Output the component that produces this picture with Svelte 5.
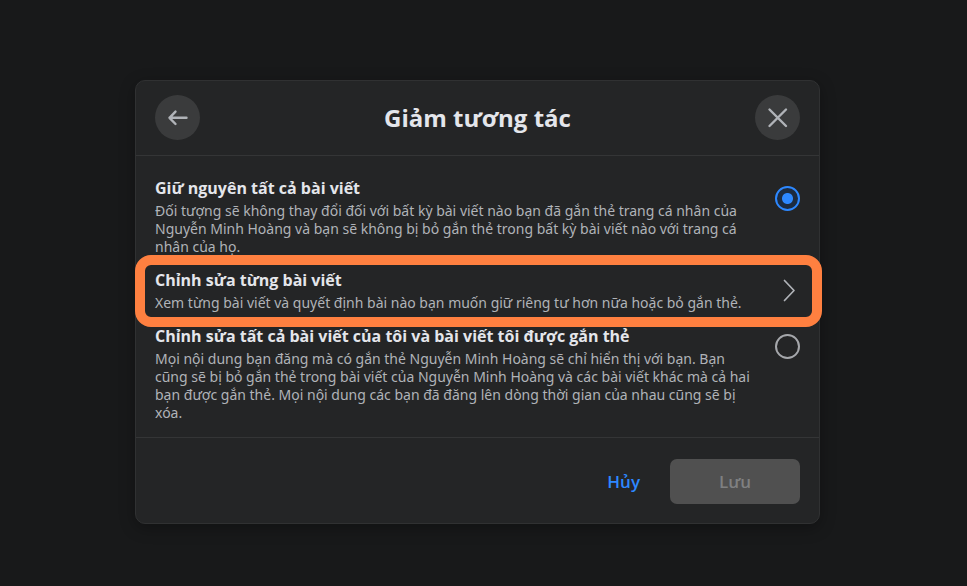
<script>
  let choice = $state('keep');
</script>

<main>
  <form class="dialog" aria-labelledby="dialog-title" onsubmit={(e) => e.preventDefault()}>
    <header>
      <button type="button" class="round" aria-label="Quay lại">
        <svg width="24" height="24" viewBox="0 0 24 24" fill="none" stroke="#b0b3b8" stroke-width="2.4" stroke-linecap="round" stroke-linejoin="round">
          <path d="M20.500 11.800H3.500M9.500 5.600L3.500 11.800L9.500 18" />
        </svg>
      </button>
      <h1 id="dialog-title">Giảm tương tác</h1>
      <button type="button" class="round" aria-label="Đóng">
        <svg width="24" height="24" viewBox="0 0 24 24" fill="none" stroke="#b0b3b8" stroke-width="2.4" stroke-linecap="round">
          <path d="M3.500 3.500L20 20M20 3.500L3.500 20" />
        </svg>
      </button>
    </header>

    <div class="options">
      <label class="option">
        <span class="text">
          <span class="name">Giữ nguyên tất cả bài viết</span>
          <span class="note">Đối tượng sẽ không thay đổi đối với bất kỳ bài viết nào bạn đã gắn thẻ trang cá nhân của Nguyễn Minh Hoàng và bạn sẽ không bị bỏ gắn thẻ trong bất kỳ bài viết nào với trang cá nhân của họ.</span>
        </span>
        <input type="radio" name="choice" value="keep" bind:group={choice} />
      </label>

      <button type="button" class="option highlighted">
        <span class="text">
          <span class="name">Chỉnh sửa từng bài viết</span>
          <span class="note">Xem từng bài viết và quyết định bài nào bạn muốn giữ riêng tư hơn nữa hoặc bỏ gắn thẻ.</span>
        </span>
        <svg class="chevron" width="20" height="24" viewBox="0 0 20 24" fill="none" stroke="#b0b3b8" stroke-width="1.700" stroke-linecap="round" stroke-linejoin="round">
          <path d="M4.500 2.500L14 12.500L4.500 22.500" />
        </svg>
      </button>

      <label class="option">
        <span class="text">
          <span class="name">Chỉnh sửa tất cả bài viết của tôi và bài viết tôi được gắn thẻ</span>
          <span class="note">Mọi nội dung bạn đăng mà có gắn thẻ Nguyễn Minh Hoàng sẽ chỉ hiển thị với bạn. Bạn cũng sẽ bị bỏ gắn thẻ trong bài viết của Nguyễn Minh Hoàng và các bài viết khác mà cả hai bạn được gắn thẻ. Mọi nội dung các bạn đã đăng lên dòng thời gian của nhau cũng sẽ bị xóa.</span>
        </span>
        <input type="radio" name="choice" value="all" bind:group={choice} />
      </label>
    </div>

    <footer>
      <button type="button" class="cancel">Hủy</button>
      <button type="submit" class="save" disabled>Lưu</button>
    </footer>
  </form>
</main>

<style>
  :global(body) {
    margin: 0;
    background: #18191a;
  }
  main {
    display: flex;
    justify-content: center;
    padding: 80px 12px 40px 0;
    font-family: 'Open Sans', 'Noto Sans', sans-serif;
    color: #e4e6eb;
  }
  .dialog {
    box-sizing: border-box;
    width: 100%;
    max-width: 685px;
    background: #242526;
    border: 1px solid #303132;
    border-radius: 10px;
    box-shadow: 0 4px 16px rgba(0, 0, 0, 0.3);
  }
  button {
    font: inherit;
    color: inherit;
    border: 0;
    padding: 0;
    background: none;
    cursor: pointer;
  }
  header {
    display: flex;
    align-items: center;
    justify-content: space-between;
    padding: 14px 19px 15px;
    border-bottom: 1px solid #343536;
  }
  .round {
    display: flex;
    align-items: center;
    justify-content: center;
    width: 45px;
    height: 45px;
    border-radius: 50%;
    background: #3a3b3c;
  }
  h1 {
    margin: 0;
    font-size: 24px;
    line-height: 32px;
    font-weight: 700;
  }
  .options {
    display: flex;
    flex-direction: column;
    gap: 12px;
    padding: 20px 19px 15px;
    border-bottom: 1px solid #343536;
  }
  .option {
    display: flex;
    justify-content: space-between;
    gap: 16px;
    position: relative;
    text-align: left;
    cursor: pointer;
  }
  .text {
    display: flex;
    flex-direction: column;
    gap: 2px;
  }
  .name {
    font-size: 16px;
    line-height: 24px;
    font-weight: 700;
  }
  .note {
    font-family: 'Noto Sans', 'Open Sans', sans-serif;
    font-size: 14px;
    line-height: 18px;
    color: #b0b3b8;
  }
  input {
    appearance: none;
    box-sizing: border-box;
    flex: none;
    width: 25px;
    height: 25px;
    margin: 10px 0 0;
    border: 2px solid #a5a7ab;
    border-radius: 50%;
  }
  input:checked {
    border-color: #2d88ff;
    background: radial-gradient(circle, #2d88ff 5px, #1c2b40 6px);
  }
  .chevron {
    flex: none;
    align-self: center;
  }
  .highlighted::after {
    content: '';
    position: absolute;
    inset: -13px -22px -15px -20px;
    border: 10px solid #ff8040;
    border-radius: 16px;
    pointer-events: none;
  }
  footer {
    display: flex;
    justify-content: flex-end;
    gap: 4px;
    padding: 21px 19px 19px;
    font-size: 17px;
    font-weight: 600;
  }
  .cancel {
    padding: 0 26px;
    color: #2d88ff;
  }
  .save {
    width: 130px;
    height: 45px;
    border-radius: 7px;
    background: #505050;
    color: #7f8081;
  }
</style>
